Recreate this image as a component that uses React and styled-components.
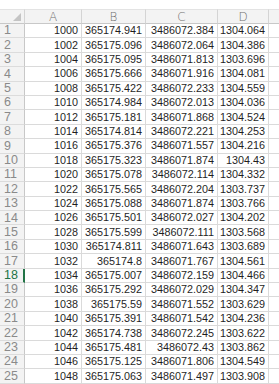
import React from "react";
import styled, { createGlobalStyle } from "styled-components";

const GlobalStyle = createGlobalStyle`
  html, body {
    margin: 0;
    padding: 0;
    background: #ffffff;
    overflow: hidden;
  }
`;

const rows = [
  [1000, "365174.941", "3486072.384", "1304.064"],
  [1002, "365175.096", "3486072.064", "1304.386"],
  [1004, "365175.095", "3486071.813", "1303.696"],
  [1006, "365175.666", "3486071.916", "1304.081"],
  [1008, "365175.422", "3486072.233", "1304.559"],
  [1010, "365174.984", "3486072.013", "1304.036"],
  [1012, "365175.181", "3486071.868", "1304.524"],
  [1014, "365174.814", "3486072.221", "1304.253"],
  [1016, "365175.376", "3486071.557", "1304.216"],
  [1018, "365175.323", "3486071.874", "1304.43"],
  [1020, "365175.078", "3486072.114", "1304.332"],
  [1022, "365175.565", "3486072.204", "1303.737"],
  [1024, "365175.088", "3486071.874", "1303.766"],
  [1026, "365175.501", "3486072.027", "1304.202"],
  [1028, "365175.599", "3486072.111", "1303.568"],
  [1030, "365174.811", "3486071.643", "1303.689"],
  [1032, "365174.8", "3486071.767", "1304.561"],
  [1034, "365175.007", "3486072.159", "1304.466"],
  [1036, "365175.292", "3486072.029", "1304.347"],
  [1038, "365175.59", "3486071.552", "1303.629"],
  [1040, "365175.391", "3486071.542", "1304.236"],
  [1042, "365174.738", "3486072.245", "1303.622"],
  [1044, "365175.481", "3486072.43", "1303.862"],
  [1046, "365175.125", "3486071.806", "1304.549"],
  [1048, "365175.063", "3486071.497", "1303.908"],
];

const SELECTED_ROW = 18;

const Page = styled.div`
  padding-top: 9px;
  width: 279px;
  height: 384px;
  box-sizing: border-box;
  overflow: hidden;
`;

const Sheet = styled.div`
  display: grid;
  grid-template-columns: 25px 57px 64px 72px 51px 40px;
  grid-template-rows: 15px repeat(25, 14.4px);
  font-family: "Liberation Sans", Arial, sans-serif;
`;

const Corner = styled.div`
  position: relative;
  background: #f3f3f3;
  border-right: 1px solid #d4d4d4;
  border-bottom: 1px solid #c8c8c8;
  border-top: 1px solid #e3e3e3;
  box-sizing: border-box;
`;

const Triangle = styled.div`
  position: absolute;
  right: 3px;
  bottom: 2px;
  width: 0;
  height: 0;
  border-left: 8px solid transparent;
  border-bottom: 8px solid #c4c4c4;
`;

const ColHeader = styled.div`
  background: #f3f3f3;
  border-right: 1px solid #d4d4d4;
  border-bottom: 1px solid #c8c8c8;
  border-top: 1px solid #e3e3e3;
  box-sizing: border-box;
  display: flex;
  align-items: center;
  justify-content: center;
  color: #6f6f6f;
  font-size: 12px;
  font-family: "DejaVu Sans", "Liberation Sans", sans-serif;
  font-weight: 300;
  line-height: 1;
`;

const RowHeader = styled.div`
  background: #f3f3f3;
  border-right: ${(p) => (p.$selected ? "2px solid #217346" : "1px solid #c8c8c8")};
  border-bottom: 1px solid #dcdcdc;
  box-sizing: border-box;
  display: flex;
  align-items: center;
  padding-left: 4px;
  color: ${(p) => (p.$selected ? "#217346" : "#8a8a8a")};
  font-size: 12.5px;
  line-height: 1;
`;

const Cell = styled.div`
  border-right: 1px solid #dadada;
  border-bottom: 1px solid #dadada;
  box-sizing: border-box;
  display: flex;
  align-items: center;
  justify-content: flex-end;
  padding-right: 3px;
  color: #1f1f1f;
  font-size: 10.8px;
  line-height: 1;
  white-space: nowrap;
  overflow: hidden;
`;

export default function App() {
  return (
    <Page>
      <GlobalStyle />
      <Sheet>
        <Corner>
          <Triangle />
        </Corner>
        {["A", "B", "C", "D", ""].map((c, i) => (
          <ColHeader key={i}>{c}</ColHeader>
        ))}
        {rows.map((r, i) => (
          <React.Fragment key={i}>
            <RowHeader $selected={i + 1 === SELECTED_ROW}>{i + 1}</RowHeader>
            {r.map((v, j) => (
              <Cell key={j}>{v}</Cell>
            ))}
            <Cell />
          </React.Fragment>
        ))}
      </Sheet>
    </Page>
  );
}
